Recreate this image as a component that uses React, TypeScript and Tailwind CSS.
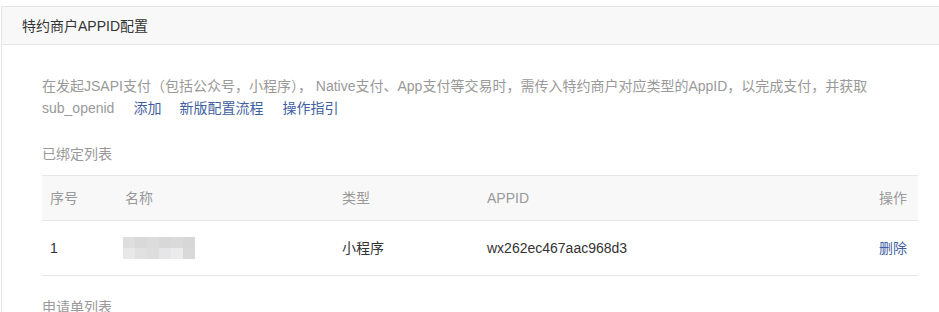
// 特约商户 APPID 配置面板
const LINK = 'text-[#3f5f9f]';

const BLUR_TOP = ['#dedede', '#d9d9d9', '#dcdcdc', '#d8d8d8', '#dadada', '#d7d7d7'];
const BLUR_BOTTOM = ['#e8e8e8', '#e1e1e1', '#dddddd', '#e6e6e8', '#ebebeb', '#d9d9d9'];

// ── Pixelated (打码) name cell ────────────────────────────────────────────────
function BlurredName() {
  return (
    <div className="grid grid-cols-6 w-[72px] -ml-[2px]">
      {BLUR_TOP.map((c, i) => (
        <div key={`t${i}`} className="h-[11px]" style={{ background: c }} />
      ))}
      {BLUR_BOTTOM.map((c, i) => (
        <div key={`b${i}`} className="h-[11px]" style={{ background: c }} />
      ))}
    </div>
  );
}

export default function App() {
  return (
    <div
      className="w-[939px] h-[312px] overflow-hidden bg-white pt-[6px] pl-px"
      style={{ fontFamily: '"Liberation Sans", "Noto Sans CJK SC", sans-serif' }}
    >
      <div className="w-[958px] border border-[#e6e6e6] bg-white">
        {/* Header */}
        <div className="h-[38px] flex items-center px-5 bg-[#f8f8f8] border-b border-[#e6e6e6]">
          <h2 className="text-[14px] text-[#333] pt-px">特约商户APPID配置</h2>
        </div>

        {/* Body */}
        <div className="px-10 pt-[30px] text-[14px] leading-[22px]">
          <div className="text-[#999]">
            <p className="whitespace-nowrap">
              在发起JSAPI支付（包括公众号，小程序）， Native支付、App支付等交易时，需传入特约商户对应类型的AppID，以完成支付，并获取
            </p>
            <div className="flex">
              <span>sub_openid</span>
              <a className={`${LINK} ml-[19px]`}>添加</a>
              <a className={`${LINK} ml-[18px]`}>新版配置流程</a>
              <a className={`${LINK} ml-[19px]`}>操作指引</a>
            </div>
          </div>

          <h3 className="mt-[24px] text-[#999]">已绑定列表</h3>

          {/* Bound list table */}
          <table className="mt-[10px] w-[876px] border-collapse">
            <thead>
              <tr className="h-[45px] bg-[#f8f8f8] border-y border-[#e6e6e6] text-[#999] text-left">
                <th className="font-normal pl-2 w-[83px]">序号</th>
                <th className="font-normal w-[217px]">名称</th>
                <th className="font-normal w-[145px]">类型</th>
                <th className="font-normal">APPID</th>
                <th className="font-normal text-right pr-[11px]">操作</th>
              </tr>
            </thead>
            <tbody>
              <tr className="h-[55px] border-b border-[#e6e6e6] text-[#333]">
                <td className="pl-2">1</td>
                <td>
                  <BlurredName />
                </td>
                <td>小程序</td>
                <td>wx262ec467aac968d3</td>
                <td className="text-right pr-[11px]">
                  <a className={LINK}>删除</a>
                </td>
              </tr>
            </tbody>
          </table>

          <h3 className="mt-[20px] text-[#999]">申请单列表</h3>
        </div>
      </div>
    </div>
  );
}
